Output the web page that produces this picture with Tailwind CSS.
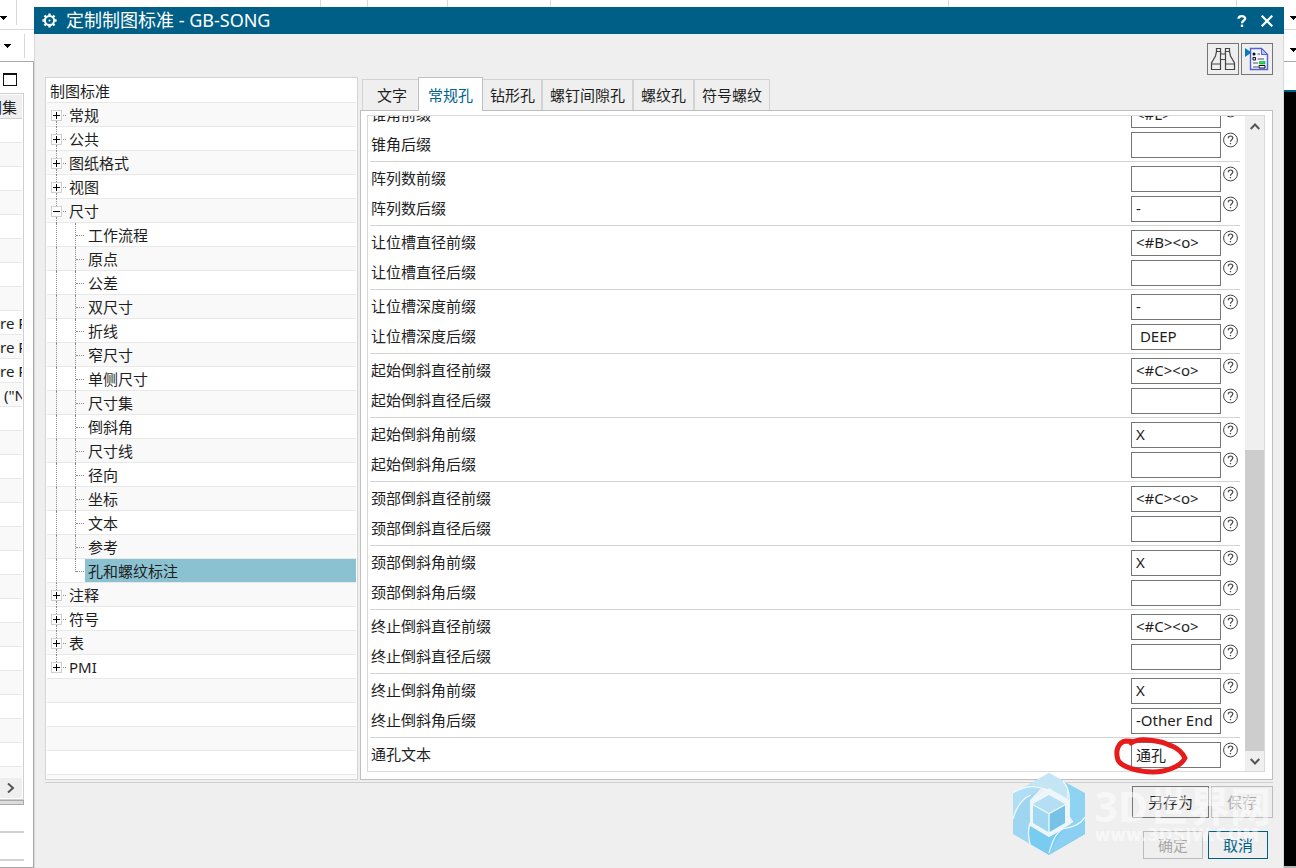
<!DOCTYPE html>
<html lang="zh-CN">
<head>
<meta charset="utf-8">
<title>定制制图标准 - GB-SONG</title>
<script src="https://cdn.jsdelivr.net/npm/@tailwindcss/browser@4"></script>
</head>
<body class="flex h-screen overflow-hidden bg-white font-['Noto_Sans','Noto_Sans_CJK_SC',sans-serif] text-[15px] leading-[22px] text-[#1e1e1e]">

<!-- Application strip left of the dialog -->
<aside class="flex w-[34px] shrink-0 flex-col">
  <div class="flex h-[30px] items-start border-b border-[#d8d8d8]">
    <svg class="mt-[15px] h-[5px] w-4" viewBox="0 0 16 5" fill="#000" shape-rendering="crispEdges"><path d="M0 1h7L3.500 5z"/></svg>
    <span class="h-[25px] w-px bg-[#d8d8d8]"></span>
  </div>
  <div class="flex h-[31px] items-start pt-1">
    <svg class="mt-[10px] h-[5px] w-6" viewBox="0 0 24 5" fill="#000" shape-rendering="crispEdges"><path d="M4 0h7L7.500 4z"/></svg>
    <span class="h-6 w-px bg-[#d8d8d8]"></span>
  </div>
  <div class="flex min-h-0 flex-1 flex-col border-t border-r border-b border-[#a9a9a9] pr-[9px]">
    <div class="h-[31px] shrink-0 pt-[11px] pl-[3px]"><svg class="h-[13px] w-[14px]" viewBox="0 0 14 13" shape-rendering="crispEdges"><path d="M0 0h14v13H0zM1 2v10h12V2z" fill="#111" fill-rule="evenodd"/></svg></div>
    <div class="flex min-h-0 flex-1 flex-col border-t border-r border-b border-[#cfcfcf] pt-px pr-px pb-px">
      <div class="flex h-6 shrink-0 justify-end overflow-hidden border-b border-[#d0d0d0] bg-[#efefef] pt-px pr-[5px] whitespace-nowrap"><span>图集</span></div>
      <div id="bg-rows" class="min-h-0 flex-1 overflow-hidden"></div>
      <div class="flex h-5 shrink-0 items-center bg-[#efefef] pl-[7px]"><svg class="h-[10px] w-2" viewBox="0 0 8 10" fill="none" stroke="#555" stroke-width="2"><path d="M1 .5 6 5 1 9.500"/></svg></div>
    </div>
    <div class="h-[5px] shrink-0 border border-l-0 border-[#a9a9a9] bg-[#dcdcdc]"></div>
    <div class="h-[28px] shrink-0 border-b-2 border-[#d2d2d2]"></div>
    <div class="h-[28px] shrink-0 border-b-2 border-[#d2d2d2]"></div>
    <div class="h-[6px] shrink-0"></div>
  </div>
</aside>

<div class="flex min-w-0 flex-1 flex-col">
  <!-- Toolbar separators visible above the dialog -->
  <div class="flex h-[7px] shrink-0 pl-[286px]">
    <span class="w-[47px] border-l border-[#d8d8d8]"></span>
    <span class="w-20 border-l border-[#d8d8d8]"></span>
    <span class="w-[103px] border-l border-[#d8d8d8]"></span>
    <span class="w-[398px] border-l border-[#d8d8d8]"></span>
    <span class="w-[288px] border-l border-[#d8d8d8]"></span>
    <span class="border-l border-[#d8d8d8]"></span>
  </div>

  <section role="dialog" aria-labelledby="dlg-title" class="flex min-h-0 flex-1 flex-col">
    <header class="flex h-[27px] shrink-0 items-center bg-[#005f87] pr-[11px] pl-2 text-white">
      <svg class="mr-[9px] h-[15px] w-[15px]" viewBox="0 0 15 15" fill="none" stroke="#fff"><circle cx="7.500" cy="7.500" r="4.600" stroke-width="2"/><circle cx="7.500" cy="7.500" r="1" fill="#fff" stroke="none"/><path d="M7.500 .4v2.200M7.500 12.400v2.200M.4 7.500h2.200M12.400 7.500h2.200M2.500 2.500l1.500 1.500M11 11l1.500 1.500M2.500 12.500 4 11M11 4l1.500-1.500" stroke-width="2.400"/></svg>
      <h1 id="dlg-title" class="flex-1 pb-px text-lg leading-6">定制制图标准 - GB-SONG</h1>
      <button aria-label="帮助" class="mr-[14px] flex"><svg class="h-3 w-[10px]" viewBox="0 0 10 12" fill="none" stroke="#fff" stroke-width="2.300"><path d="M1.500 3.800C1.500 .4 8.200 .4 8.200 3.500 8.200 5.600 5 5.400 5 8.200"/><path d="M5 9.600V12"/></svg></button>
      <button aria-label="关闭" class="flex"><svg class="h-3 w-3" viewBox="0 0 12 12" stroke="#fff" stroke-width="2.200"><path d="M.7.7l10.600 10.600M11.300.7.7 11.300"/></svg></button>
    </header>

    <div class="flex min-h-0 flex-1 flex-col border-x border-[#d9d9d9] bg-[#efefef] pr-[10px] pl-[10px]">
      <div class="flex h-[43px] shrink-0 items-start justify-end gap-[2px] pt-[9px]">
        <button aria-label="查找" class="flex h-8 w-8 items-center justify-center border border-[#767676]">
          <svg class="h-6 w-[26px]" viewBox="0 0 26 24" fill="none" stroke="#444" stroke-width="1.200"><path d="M6.500 1.500h4v3h-4zM15.500 1.500h4v3h-4zM6.500 4.500 5.500 9 1.500 16v6.500h9V6l.500-1.500M19.500 4.500l1 4.500 4 7v6.500h-9V6L15 4.500M10.500 7h5M10.500 12.500h5M1.500 17h9M15.500 17h9"/></svg>
        </button>
        <button aria-label="继承设置" class="flex h-8 w-8 items-center justify-center border border-[#767676]">
          <svg class="h-6 w-6" viewBox="0 0 24 24"><path d="M5.500 1.500h11l6 6v15h-17z" fill="#f3f5ff" stroke="#5560d8" stroke-width="1.400"/><path d="M16.500 1.500v6h6z" fill="#b9c2ff" stroke="#5560d8"/><path d="M0 1 6.500 5.500 0 10z" fill="#0a7ab8"/><circle cx="9" cy="7" r="1.500" fill="#111"/><path d="M12.500 7h2.500M12.500 12H19M8 16h5M8 20h5" stroke="#555"/><path d="M8 10.500h2.500V13H8z" fill="none" stroke="#111"/><path d="M14.500 14.500H20V17h-5.500z" fill="#19e04c" stroke="#0a9c30" stroke-width=".6"/><path d="M14 18.500h6V21h-6z" fill="#fff" stroke="#111"/></svg>
        </button>
      </div>

      <div class="flex min-h-0 flex-1 gap-[2px]">
        <!-- Standard tree -->
        <nav aria-label="制图标准" class="flex w-[313px] shrink-0 flex-col border border-[#d4d4d4] bg-white px-px pb-px">
          <div class="h-[25px] shrink-0 border-b border-[#e8e8e8] pt-[2px] pl-[3px]">制图标准</div>
          <div id="tree" role="tree" class="min-h-0 flex-1 overflow-hidden"></div>
        </nav>

        <!-- Tabbed settings -->
        <div class="flex min-w-0 flex-1 flex-col">
          <div role="tablist" class="flex h-[33px] shrink-0 items-end pl-[2px]">
            <button role="tab" class="h-[31px] border-t border-l border-[#d2d2d2] pr-[11px] pl-[14px]">文字</button>
            <button role="tab" aria-selected="true" class="relative -mb-px h-[34px] border-x border-t border-[#bfbfbf] bg-white px-[9px] text-[#00648e]">常规孔</button>
            <button role="tab" class="h-[31px] border-t border-r-2 border-[#d2d2d2] pr-[6px] pl-[7px]">钻形孔</button>
            <button role="tab" class="h-[31px] border-t border-r-2 border-[#d2d2d2] px-[7px]">螺钉间隙孔</button>
            <button role="tab" class="h-[31px] border-t border-r-2 border-[#d2d2d2] px-[7px]">螺纹孔</button>
            <button role="tab" class="h-[31px] border-t border-r border-[#d2d2d2] px-[7px]">符号螺纹</button>
          </div>
          <div role="tabpanel" class="flex min-h-0 flex-1 flex-col border border-[#bfbfbf] bg-white pt-1 pr-[7px] pb-[7px] pl-[6px]">
            <div class="relative flex min-h-0 flex-1 border border-[#d9d9d9]">
              <form id="fields" class="flex min-w-0 flex-1 flex-col justify-end overflow-hidden pr-[5px] pl-[2px]"></form>
              <div class="flex w-[19px] shrink-0 flex-col items-stretch bg-[#efefef]">
                <button aria-label="向上滚动" class="flex h-[21px] items-center justify-center"><svg class="h-[7px] w-[10px]" viewBox="0 0 10 7" fill="none" stroke="#555" stroke-width="2"><path d="M.7 6 5 1.500 9.300 6"/></svg></button>
                <div class="flex min-h-0 flex-1 flex-col justify-end"><div class="h-[301px] bg-[#cdcdcd]"></div></div>
                <button aria-label="向下滚动" class="flex h-[20px] items-center justify-center"><svg class="h-[7px] w-[10px]" viewBox="0 0 10 7" fill="none" stroke="#555" stroke-width="2"><path d="M.7 1 5 5.500 9.300 1"/></svg></button>
              </div>
              <!-- Hand-drawn ring round the last field -->
              <svg class="pointer-events-none absolute right-[75px] -bottom-[5px] h-10 w-[76px]" viewBox="0 0 76 40" fill="none" stroke="#e61c1c" stroke-width="5" stroke-linecap="round" stroke-linejoin="round"><path d="M18 7C26 2 36 4 48 6 53 7 55 9 59 10 66 13 70 18 72 22 68 30 54 36 40 36 26 36 8 31 5 24 2 15 5 6 13 5 16 5 18 5 20 6"/></svg>
            </div>
          </div>
        </div>
      </div>

      <!-- Footer with the site mark over the buttons -->
      <footer class="relative mt-[2px] shrink-0 border-t border-[#d0d0d0] pt-[3px] pb-[9px]">
        <div class="flex justify-end gap-[2px]">
          <button class="h-8 w-[77px] border border-[#767676]">另存为</button>
          <button disabled class="h-8 w-[62px] border border-[#bcbcbc] text-[#a8a8a8]">保存</button>
        </div>
        <div class="mt-[13px] flex justify-end gap-[5px] pr-[5px]">
          <button disabled class="h-7 w-[60px] border border-[#bcbcbc] text-[#a8a8a8]">确定</button>
          <button class="h-7 w-[60px] border border-[#005f87] text-[#005f87]">取消</button>
        </div>
        <div class="pointer-events-none absolute -top-[10px] right-[2px] flex items-start gap-[10px]">
          <svg class="h-[82px] w-[72px]" viewBox="0 0 72 82">
            <path d="M36 0 54 10C50 20 37 17 26 14 17 12 8 15 0 20z" fill="#c3e5f4"/>
            <path d="M36 0 54 10V36L36 15 26 14 12 14z" fill="#c3e5f4"/>
            <path d="M50 8 72 20V57C62 51 55 46 55 34 55 24 58 17 50 8z" fill="#8fd3f3"/>
            <path d="M72 20V61L36 82 46 62 56 52 64 46z" fill="#8fd3f3"/>
            <path d="M56 52C45 57 40 68 36 82L72 61V46C68 50 62 53 56 52z" fill="#8bd0f2"/>
            <path d="M17 53 36 64 56 53 C46 60 41 72 36 82L17 71C15 64 15 58 17 53z" fill="#78cbf1"/>
            <path d="M0 20C10 14 18 12 28 15L17 27V53C15 59 15 65 17 71L0 61z" fill="#9ed6f2"/>
            <path d="M0 20C9 14 19 12 29 15L18 22C9 26 3 34 0 46z" fill="#b2def5"/>
            <path d="M0 46C4 32 10 25 18 22M0 20C9 14 19 12 28 15 38 19 46 20 54 27M50 8C59 19 56 30 56 52M72 44C66 54 56 54 50 56 42 60 39 70 36 80M17 71C15 61 15 57 17 50" fill="none" stroke="#f3fafd" stroke-width="1.200"/>
            <path d="M36 15 56 27V52L36 64 17 52V27z" fill="#edf6fa"/>
            <path d="M36 22 52 31 36 40 20 31z" fill="#b3def3"/>
            <path d="M20 32.500 35.300 41V59L20 50z" fill="#9fd6f0"/>
            <path d="M52 32.500 36.700 41V59L52 50z" fill="#77c3e8"/>
          </svg>
          <div class="pt-3 whitespace-nowrap text-white/50">
            <div class="text-[41px] leading-[42px] font-bold">3D世界网</div>
            <div class="font-['DejaVu_Sans',sans-serif] text-[17px] leading-4 font-bold">www.3DSJW.COM</div>
          </div>
        </div>
      </footer>
    </div>
  </section>
</div>

<!-- Application strip right of the dialog -->
<aside class="flex w-3 shrink-0 flex-col overflow-hidden">
  <div class="h-[30px] shrink-0 border-b border-[#d8d8d8] pt-4 pl-[6px]"><svg class="h-[5px] w-[7px]" viewBox="0 0 7 5" fill="#000" shape-rendering="crispEdges"><path d="M0 0h7L3.500 4z"/></svg></div>
  <div class="h-8 shrink-0 border-b border-[#a9a9a9] pt-[18px] pl-[6px]"><svg class="h-[5px] w-[7px]" viewBox="0 0 7 5" fill="#000" shape-rendering="crispEdges"><path d="M0 0h7L3.500 4z"/></svg></div>
  <div class="mt-7 flex-1 border-t-2 border-[#005f87] bg-black"></div>
  <div class="h-[2px] shrink-0 bg-[#b5b5b5]"></div>
</aside>

<script>
const esc = s => s.replace(/&/g, '&amp;').replace(/</g, '&lt;').replace(/>/g, '&gt;').replace(/"/g, '&quot;');

// Tree
const roots = [['常规'], ['公共'], ['图纸格式'], ['视图'],
  ['尺寸', ['工作流程', '原点', '公差', '双尺寸', '折线', '窄尺寸', '单侧尺寸', '尺寸集', '倒斜角', '尺寸线', '径向', '坐标', '文本', '参考', '孔和螺纹标注']],
  ['注释'], ['符号'], ['表'], ['PMI']];
let n = 0, tree = '';
const shade = () => (n++ % 2 ? 'bg-white' : 'bg-[#f9f9f9]');
const dots = 'border-l border-dotted border-[#8c8c8c]';
roots.forEach(([name, kids], i) => {
  tree += `<div role="treeitem" class="flex h-6 border-b border-[#e8e8e8] pl-1 ${shade()}">
    <div class="-mb-px flex w-[11px] flex-col">
      <span class="ml-[5px] h-[7px] ${i ? dots : ''}"></span>
      <button aria-label="展开或折叠${name}" class="flex h-[11px] w-[11px] items-center justify-center border border-[#d0d0d0] bg-white"><svg class="h-[7px] w-[7px]" viewBox="0 0 7 7" fill="#000" shape-rendering="crispEdges"><path d="${kids ? 'M0 3h7v1H0z' : 'M0 3h7v1H0zM3 0h1v7H3z'}"/></svg></button>
      <span class="ml-[5px] flex-1 ${i < roots.length - 1 ? dots : ''}"></span>
    </div>
    <span class="mt-3 mr-[3px] ml-px h-px w-[3px] border-t border-dotted border-[#8c8c8c]"></span>
    <span class="pt-px">${name}</span></div>`;
  (kids || []).forEach((k, j) => {
    const last = j === kids.length - 1;
    tree += `<div role="treeitem" class="flex h-6 border-b border-[#e8e8e8] pl-[9px] ${shade()}">
      <span class="-mb-px w-[19px] ${dots}"></span>
      <span class="${last ? 'h-[13px]' : '-mb-px'} w-px ${dots}"></span>
      <span class="mt-3 mr-px h-px w-2 border-t border-dotted border-[#8c8c8c]"></span>
      <span class="flex-1 pt-px pl-[3px] ${last ? 'bg-[#8bc2d1]' : ''}">${k}</span></div>`;
  });
});
for (let i = 0; i < 5; i++) tree += `<div class="h-6 border-b border-[#e8e8e8] ${shade()}"></div>`;
document.getElementById('tree').innerHTML = tree;

// Rows of the panel behind the dialog
const bgText = { 8: 're P', 9: 're P', 10: 're P', 11: ' ("N' };
let rows = '';
for (let i = 0; i < 28; i++) rows += `<div class="h-6 overflow-hidden border-b border-[#e8e8e8] pt-px whitespace-pre ${i % 2 ? 'bg-[#f9f9f9]' : 'bg-white'}">${esc(bgText[i] || '')}</div>`;
document.getElementById('bg-rows').innerHTML = rows;

// Prefix / suffix fields
const groups = [['锥角', '<#L>', ''], ['阵列数', '', '-'], ['让位槽直径', '<#B><o>', ''], ['让位槽深度', '-', ' DEEP'],
  ['起始倒斜直径', '<#C><o>', ''], ['起始倒斜角', 'X', ''], ['颈部倒斜直径', '<#C><o>', ''], ['颈部倒斜角', 'X', ''],
  ['终止倒斜直径', '<#C><o>', ''], ['终止倒斜角', 'X', '-Other End']];
let id = 0;
const field = (label, value) => `<div class="flex h-[26px] shrink-0 items-start gap-[2px] pr-[2px] pl-px">
  <label for="f${++id}" class="flex-1 pt-px">${label}</label>
  <input id="f${id}" value="${esc(value)}" class="h-[26px] w-[90px] border border-[#767676] bg-white px-1 pb-[2px] outline-none">
  <button type="button" aria-label="${label}帮助" class="flex"><svg class="h-4 w-[15px]" viewBox="0 0 15 16" fill="none" stroke="#444"><circle cx="7.500" cy="8" r="6.900"/><path d="M5.300 6.200C5.300 3.300 9.800 3.300 9.800 6.100 9.800 7.900 7.500 7.700 7.500 9.800M7.500 11v1.300" stroke-width="1.200"/></svg></button></div>`;
document.getElementById('fields').innerHTML = groups.map(([g, a, b]) =>
  `<div class="flex shrink-0 flex-col gap-1 border-t border-[#d4d4d4] pt-1 pb-[3px]">${field(g + '前缀', a)}${field(g + '后缀', b)}</div>`).join('') +
  `<div class="shrink-0 border-t border-[#d4d4d4] pt-1 pb-[3px]">${field('通孔文本', '通孔')}</div>`;
</script>
</body>
</html>
